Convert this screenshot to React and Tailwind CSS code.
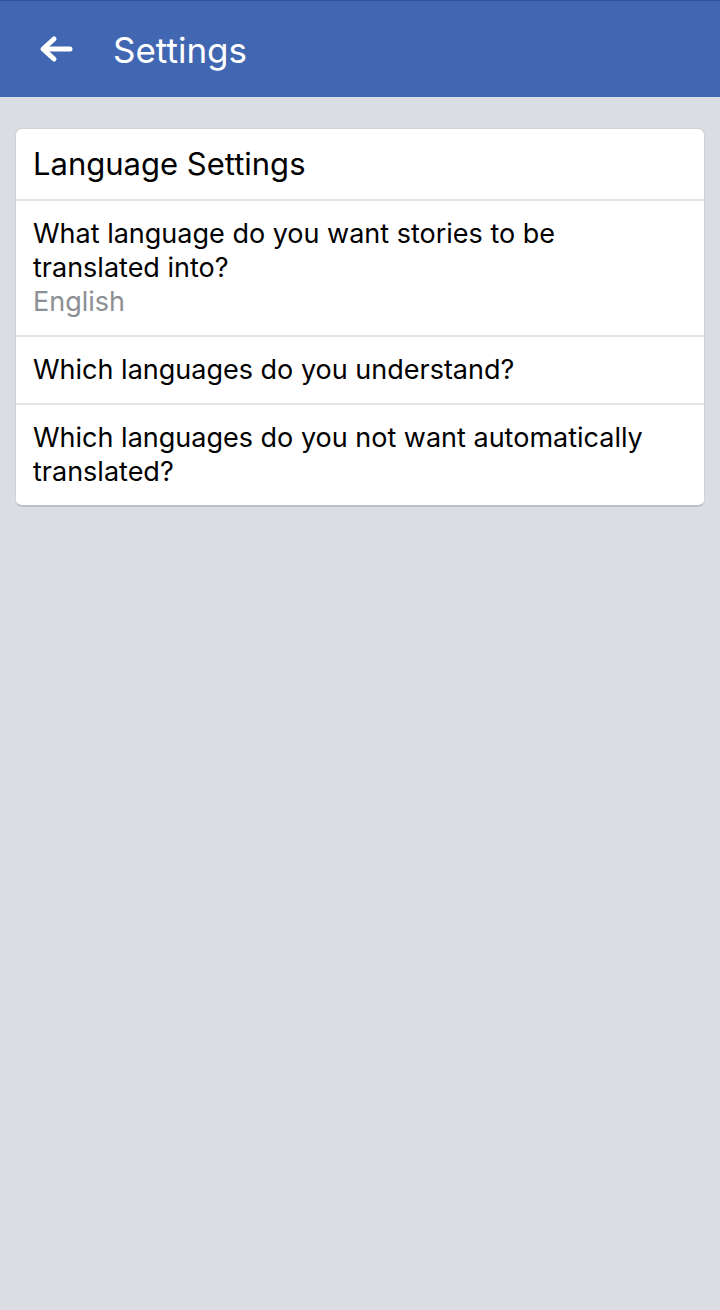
import React from "react";

const rows = [
  { title: "What language do you want stories to be translated into?", value: "English" },
  { title: "Which languages do you understand?" },
  { title: "Which languages do you not want automatically translated?" },
];

export default function App() {
  return (
    <div className="min-h-screen h-[1310px] bg-[#dadde1]" style={{ fontFamily: "Inter, Roboto, 'Noto Sans', sans-serif" }}>
      <div className="h-[97px] bg-[#4267b2] border-t border-[#34539a] flex items-center">
        <div className="w-[113px] flex items-center pl-[38px]">
          <svg width="36" height="30" viewBox="0 0 36 30" fill="none">
            <path d="M32 15H6M16 5L5 15l11 10" stroke="white" strokeWidth="5" strokeLinecap="round" strokeLinejoin="round" />
          </svg>
        </div>
        <span className="text-white text-[35px] pt-[2px]">Settings</span>
      </div>
      <div className="px-[15px] pt-[31px]">
        <div className="bg-white rounded-[7px] border border-[#cfd1d5] border-b-[#bcbfc4] border-b-2 overflow-hidden">
          <div className="h-[72px] px-[17px] flex items-center text-[31px] text-black border-b-2 border-[#e4e5e8]">
            Language Settings
          </div>
          {rows.map((r, i) => (
            <div
              key={i}
              className={`px-[17px] py-[16px] text-[27px] leading-[34px] text-black ${i < rows.length - 1 ? "border-b-2 border-[#e4e5e8]" : ""}`}
            >
              <div>{r.title}</div>
              {r.value && <div className="text-[#8d8f93]">{r.value}</div>}
            </div>
          ))}
        </div>
      </div>
    </div>
  );
}
